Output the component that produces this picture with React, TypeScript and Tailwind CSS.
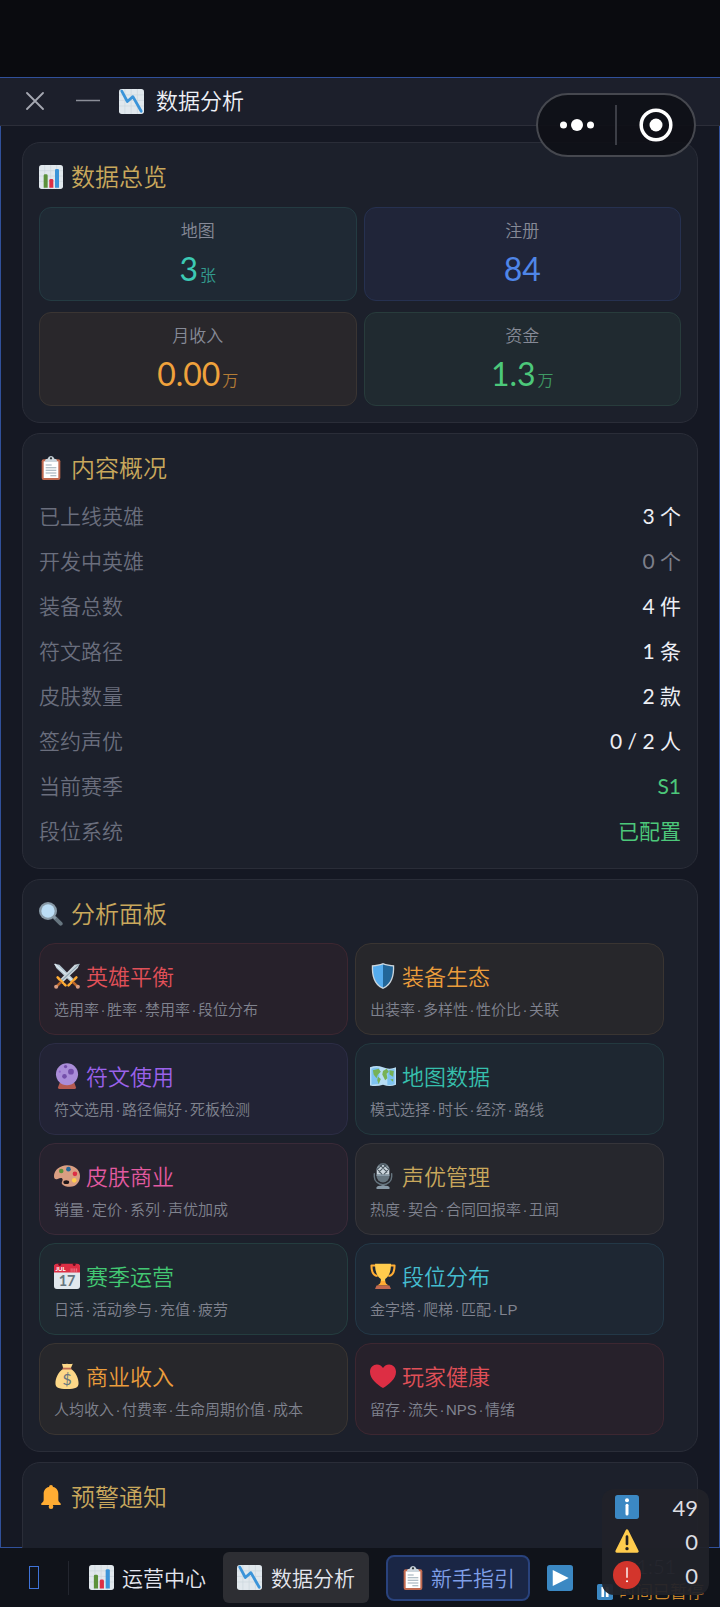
import React from "react";

const FONT = "font-['Lato','Noto_Sans_CJK_SC',sans-serif]";

type IconProps = { className: string };

function Svg({ className, children }: { className: string; children: React.ReactNode }) {
  return (
    <svg viewBox="0 0 36 36" className={className} aria-hidden="true">
      {children}
    </svg>
  );
}

function ChartGrid() {
  return (
    <>
      <rect width="36" height="36" rx="4" fill="#E1E8ED" />
      <path d="M0 8.5h36M0 16.5h36M0 24.5h36M8.5 0v36M17.5 0v36M26.5 0v36" stroke="#CCD6DD" strokeWidth="1" />
    </>
  );
}

const ChartDown = ({ className }: IconProps) => (
  <Svg className={className}>
    <ChartGrid />
    <path d="M4 3l8 15 8-7 12 21" fill="none" stroke="#3B94D9" strokeWidth="4" strokeLinecap="round" strokeLinejoin="round" />
  </Svg>
);

const BarChart = ({ className }: IconProps) => (
  <Svg className={className}>
    <ChartGrid />
    <path d="M7 16q0-2 2-2h2q2 0 2 2v18H7z" fill="#5C913B" />
    <path d="M15.500 23q0-2 2-2h2q2 0 2 2v11h-6z" fill="#DD2E44" />
    <path d="M24 8q0-2 2-2h2q2 0 2 2v26h-6z" fill="#3B94D9" />
  </Svg>
);

const Clipboard = ({ className }: IconProps) => (
  <Svg className={className}>
    <rect x="4" y="5" width="28" height="31" rx="3" fill="#C1694F" />
    <path d="M7 8h22v25H7z" fill="#fff" />
    <path d="M9 9V7q0-3 4-3 1-4 5-4t5 4q4 0 4 3v2z" fill="#CCD6DD" />
    <circle cx="18" cy="3.500" r="1.700" fill="#292F33" />
    <path d="M10 13.500h9M10 17.500h16M10 21.500h16M10 25.500h16M17 29.500h9" stroke="#99AAB5" strokeWidth="1.600" />
  </Svg>
);

const Magnifier = ({ className }: IconProps) => (
  <Svg className={className}>
    <path d="M23 23l9.500 9.500" stroke="#66757F" strokeWidth="6" strokeLinecap="round" />
    <path d="M21 21l4 4" stroke="#8899A6" strokeWidth="4" />
    <circle cx="13.500" cy="13.500" r="13.500" fill="#8899A6" />
    <circle cx="13.500" cy="13.500" r="10" fill="#BBDDF5" />
  </Svg>
);

const Bell = ({ className }: IconProps) => (
  <Svg className={className}>
    <circle cx="18" cy="32.500" r="3.500" fill="#FFAC33" />
    <path d="M18 0q3 0 3 3c6 1 8 6 8 11v8c0 4 4 5 4 7q0 1-2 1H5q-2 0-2-1c0-2 4-3 4-7v-8C7 9 9 4 15 3q0-3 3-3z" fill="#FFAC33" />
  </Svg>
);

const Swords = ({ className }: IconProps) => (
  <Svg className={className}>
    <path d="M0.500 1l7 1.500L27 22l-4 4L3 7z" fill="#B4C6D2" />
    <path d="M1 1.500L25 24" stroke="#DCE7EE" strokeWidth="2" />
    <path d="M35.500 1l-7 1.500L9 22l4 4L33 7z" fill="#CCD6DD" />
    <path d="M35 1.500L11 24" stroke="#8CA3B1" strokeWidth="1.500" />
    <path d="M5 20l11 11M31 20L20 31" stroke="#FFAC33" strokeWidth="3.500" strokeLinecap="round" strokeDasharray="4 2.500" />
    <path d="M10 26l-6 6M26 26l6 6" stroke="#BE6A2C" strokeWidth="3.500" />
    <circle cx="3" cy="33" r="2.800" fill="#D99E82" />
    <circle cx="33" cy="33" r="2.800" fill="#D99E82" />
  </Svg>
);

const Shield = ({ className }: IconProps) => (
  <Svg className={className}>
    <path d="M18 0c5 2 10 3 15.500 3 .5 14-2 27-15.500 33C4.500 30 2 17 2.500 3 8 3 13 2 18 0z" fill="#CCD6DD" />
    <path d="M18 2.200C13 4 9 4.600 4.300 4.800 4 17 6.500 28.500 18 34z" fill="#55ACEE" />
    <path d="M18 2.200c5 1.800 9 2.400 13.700 2.600C32 17 29.500 28.500 18 34z" fill="#226699" />
  </Svg>
);

const CrystalBall = ({ className }: IconProps) => (
  <Svg className={className}>
    <path d="M8 27h20l2.500 7q.5 2-2 2h-21q-2.500 0-2-2z" fill="#B55A50" />
    <circle cx="18" cy="15.500" r="15.300" fill="#AA8DD8" />
    <circle cx="16" cy="5" r="2.300" fill="#744EAA" />
    <circle cx="23.500" cy="12" r="4" fill="#744EAA" />
    <circle cx="14.500" cy="18.500" r="3.200" fill="#744EAA" />
    <circle cx="8" cy="12" r="1.500" fill="#9266CC" />
  </Svg>
);

const WorldMap = ({ className }: IconProps) => (
  <Svg className={className}>
    <path d="M0 6q9-4 18 0 9 4 18 0v24q-9 4-18 0-9 3-18 1z" fill="#B8DDF4" />
    <path d="M2 8q7-3 11-1v22q-5 0-11 1z" fill="#7EC3F0" />
    <path d="M24 9q5 1 10-1v21q-5 2-10 1z" fill="#7EC3F0" />
    <path d="M4 10l8-2 3 4-4 4-2 5-4-5zM11 19l4 3-3 7-2-5zM18 11l5-3 3 4-3 3 1 6-3 3-4-8zM27 10l6 1-1 8-5-3zM28 23l4-1v4z" fill="#77B255" />
  </Svg>
);

const Palette = ({ className }: IconProps) => (
  <Svg className={className}>
    <path d="M18 3C8 3 0 10 0 18c0 4 2 5 5 4 4-2 7-2 7 1 0 2-2 4-1 6 2 3 7 4 11 4 9 0 14-7 14-15C36 9 28 3 18 3z" fill="#D99E82" />
    <ellipse cx="17" cy="26.500" rx="4" ry="2.700" fill="#1d1518" />
    <circle cx="10" cy="11" r="3.200" fill="#5C913B" />
    <circle cx="20" cy="8.500" r="3.200" fill="#226699" />
    <circle cx="29" cy="15" r="3.200" fill="#DD2E44" />
    <circle cx="28" cy="24" r="3.200" fill="#FFCC4D" />
  </Svg>
);

const Microphone = ({ className }: IconProps) => (
  <Svg className={className}>
    <path d="M6 15v4a12 11 0 0 0 24 0v-4" fill="none" stroke="#66757F" strokeWidth="2" strokeLinecap="round" />
    <path d="M16 29h4v3h-4z" fill="#66757F" />
    <path d="M9 34q0-3 9-3t9 3v2H9z" fill="#8899A6" />
    <rect x="9" y="0" width="18" height="27" rx="9" fill="#66757F" />
    <path d="M9.500 8a9 8 0 0 1 17 0v8h-17z" fill="#CCD6DD" />
    <path d="M13 2l11 11M18 1l8 8M9 7l8 9M23 2L12 13M18 1l-8 8M27 7l-8 9" stroke="#4c5962" strokeWidth="1.500" />
    <path d="M9 17h18" stroke="#8899A6" strokeWidth="2" />
  </Svg>
);

const Calendar = ({ className }: IconProps) => (
  <Svg className={className}>
    <rect y="2" width="36" height="34" rx="4" fill="#E1E8ED" />
    <path d="M0 13V5q0-4 4-4h28q4 0 4 4v8z" fill="#DD2E44" />
    <circle cx="8" cy="2" r="2" fill="#5b1020" />
    <circle cx="28" cy="2" r="2" fill="#5b1020" />
    <path d="M23 8.500h10M23 11h10" stroke="#F4ABBA" strokeWidth="1.200" strokeDasharray="1.500 1" />
    <text x="2" y="11.500" fontSize="8.500" fontWeight="700" fill="#fff">JUL</text>
    <text x="18" y="31.500" textAnchor="middle" fontSize="20" fontWeight="700" fill="#66757F">17</text>
  </Svg>
);

const Trophy = ({ className }: IconProps) => (
  <Svg className={className}>
    <path d="M9 3.500H2c0 8 2 14 8.500 14.500M27 3.500h7c0 8-2 14-8.500 14.500" fill="none" stroke="#FFAC33" strokeWidth="2.800" strokeLinejoin="round" />
    <path d="M7 1h22c0 12-3 18-8 21v8h-6v-8C10 19 7 13 7 1z" fill="#FFCC4D" />
    <path d="M15 25h6q0 4 5 6H10q5-2 5-6z" fill="#FFAC33" />
    <path d="M9 31h18l2 5H7z" fill="#C1694F" />
  </Svg>
);

const MoneyBag = ({ className }: IconProps) => (
  <Svg className={className}>
    <path d="M11 1q3 1 7 0 4 1 8 0l-3 7c7 4 11 13 11 20 0 6-4 8-16 8S2 34 2 28C2 21 6 12 13 8z" fill="#FDD888" />
    <path d="M12 6.500h12v2.500H12z" fill="#BF6952" />
    <text x="18" y="30" textAnchor="middle" fontSize="22" fontWeight="400" fill="#67757F">$</text>
  </Svg>
);

const Heart = ({ className }: IconProps) => (
  <Svg className={className}>
    <path d="M36 12C36 6 31.500 2 26.500 2 22.500 2 19.500 4 18 7 16.500 4 13.500 2 9.500 2 4.500 2 0 6 0 12c0 10 10 18 18 22.500C26 30 36 22 36 12z" fill="#DD2E44" />
  </Svg>
);

const Play = ({ className }: IconProps) => (
  <Svg className={className}>
    <rect width="36" height="36" rx="4" fill="#3B88C3" />
    <path d="M8 7l22 11L8 29z" fill="#fff" />
  </Svg>
);

const Pause = ({ className }: IconProps) => (
  <Svg className={className}>
    <rect width="36" height="36" rx="4" fill="#3B88C3" />
    <path d="M10 7h6v22h-6zM20 7h6v22h-6z" fill="#fff" />
  </Svg>
);

const Info = ({ className }: IconProps) => (
  <Svg className={className}>
    <rect width="36" height="36" rx="4" fill="#3B88C3" />
    <circle cx="18" cy="8" r="3" fill="#fff" />
    <path d="M18 15.500v13" stroke="#fff" strokeWidth="4.500" strokeLinecap="round" />
  </Svg>
);

const Warning = ({ className }: IconProps) => (
  <Svg className={className}>
    <path d="M18 2.500L33.500 33.500h-31z" fill="#FFCC4D" stroke="#FFCC4D" strokeWidth="4" strokeLinejoin="round" />
    <path d="M18 11.500v11" stroke="#231F20" strokeWidth="4" strokeLinecap="round" />
    <circle cx="18" cy="29.500" r="2.500" fill="#231F20" />
  </Svg>
);

const ErrorDot = ({ className }: IconProps) => (
  <Svg className={className}>
    <circle cx="18" cy="18" r="18" fill="#D3352C" />
    <path d="M18 9v12" stroke="#fff" strokeWidth="1.800" strokeLinecap="round" />
    <circle cx="18" cy="26" r="1.400" fill="#fff" />
  </Svg>
);

type Icon = (p: IconProps) => React.ReactElement;

function Card({ icon: IconEl, title, className, children }: { icon: Icon; title: string; className: string; children?: React.ReactNode }) {
  return (
    <section className={`shrink-0 rounded-[18px] border border-[#2a2d38] bg-[#1c202b] px-4 pt-4 ${className}`}>
      <h2 className="flex h-9 items-center gap-2 text-2xl leading-9 text-[#c9a85c]">
        <IconEl className="size-6" />
        {title}
      </h2>
      {children}
    </section>
  );
}

const stats = [
  { label: "地图", value: "3", unit: "张", box: "border-[#243b42] bg-[#1f2934]", text: "text-[#3cc9b4]" },
  { label: "注册", value: "84", unit: "", box: "border-[#263150] bg-[#202539]", text: "text-[#4f86e8]" },
  { label: "月收入", value: "0.00", unit: "万", box: "border-[#3a3533] bg-[#29272b]", text: "text-[#f0a23c]" },
  { label: "资金", value: "1.3", unit: "万", box: "border-[#283c3c] bg-[#202a30]", text: "text-[#4cc87a]" },
];

const rows = [
  { label: "已上线英雄", value: "3 个", color: "text-[#eceef4]" },
  { label: "开发中英雄", value: "0 个", color: "text-[#7c7f8a]" },
  { label: "装备总数", value: "4 件", color: "text-[#eceef4]" },
  { label: "符文路径", value: "1 条", color: "text-[#eceef4]" },
  { label: "皮肤数量", value: "2 款", color: "text-[#eceef4]" },
  { label: "签约声优", value: "0 / 2 人", color: "text-[#eceef4]" },
  { label: "当前赛季", value: "S1", color: "text-[#4cc87a]" },
  { label: "段位系统", value: "已配置", color: "text-[#4cc87a]" },
];

const panels: { icon: Icon; title: string; desc: string[]; box: string; text: string }[] = [
  { icon: Swords, title: "英雄平衡", desc: ["选用率", "胜率", "禁用率", "段位分布"], box: "border-[#3d2731] bg-[#27212b]", text: "text-[#e05058]" },
  { icon: Shield, title: "装备生态", desc: ["出装率", "多样性", "性价比", "关联"], box: "border-[#3a3532] bg-[#27272b]", text: "text-[#eb9d3c]" },
  { icon: CrystalBall, title: "符文使用", desc: ["符文选用", "路径偏好", "死板检测"], box: "border-[#2c2d45] bg-[#222335]", text: "text-[#9b62ea]" },
  { icon: WorldMap, title: "地图数据", desc: ["模式选择", "时长", "经济", "路线"], box: "border-[#23393f] bg-[#1e2731]", text: "text-[#36bfac]" },
  { icon: Palette, title: "皮肤商业", desc: ["销量", "定价", "系列", "声优加成"], box: "border-[#3a2a38] bg-[#26222e]", text: "text-[#e25aa0]" },
  { icon: Microphone, title: "声优管理", desc: ["热度", "契合", "合同回报率", "丑闻"], box: "border-[#36353a] bg-[#26272d]", text: "text-[#c9a85c]" },
  { icon: Calendar, title: "赛季运营", desc: ["日活", "活动参与", "充值", "疲劳"], box: "border-[#243d3f] bg-[#1f2830]", text: "text-[#43c873]" },
  { icon: Trophy, title: "段位分布", desc: ["金字塔", "爬梯", "匹配", "LP"], box: "border-[#233847] bg-[#1e2733]", text: "text-[#45bdd0]" },
  { icon: MoneyBag, title: "商业收入", desc: ["人均收入", "付费率", "生命周期价值", "成本"], box: "border-[#3a3532] bg-[#27272b]", text: "text-[#eb9d3c]" },
  { icon: Heart, title: "玩家健康", desc: ["留存", "流失", "NPS", "情绪"], box: "border-[#3d2731] bg-[#27212b]", text: "text-[#e05058]" },
];

const logs: { icon: Icon; label: string; count: number; size: string }[] = [
  { icon: Info, label: "信息", count: 49, size: "size-6" },
  { icon: Warning, label: "警告", count: 0, size: "size-6" },
  { icon: ErrorDot, label: "错误", count: 0, size: "size-7" },
];

export default function App() {
  return (
    <div className={`relative flex h-screen flex-col overflow-hidden bg-[#0a0b0f] pt-[77px] font-[350] ${FONT}`}>
      <main className="flex min-h-0 flex-1 flex-col border border-[#30509a] bg-[#151823]">
        <header className="-mx-px flex h-12 shrink-0 items-center border-b border-[#2c2e39] bg-[#1c1f2b] pb-px pl-[26px]">
          <button aria-label="关闭" className="text-[#a5a8b2]">
            <svg viewBox="0 0 18 18" className="size-[18px]" stroke="currentColor" strokeWidth="1.800" strokeLinecap="round">
              <path d="M1 1l16 16M17 1L1 17" />
            </svg>
          </button>
          <button aria-label="最小化" className="ml-8 text-[#8b8e98]">
            <svg viewBox="0 0 24 18" className="h-[18px] w-6" stroke="currentColor" strokeWidth="1.500">
              <path d="M0 8.500h24" />
            </svg>
          </button>
          <ChartDown className="ml-[19px] size-[25px]" />
          <h1 className="ml-3 text-[22px] leading-8 text-[#eef0f6]">数据分析</h1>
        </header>

        <div className="-mb-px flex min-h-0 flex-1 flex-col gap-[10px] overflow-y-auto px-[21px] pt-4 [scrollbar-width:none]">
          <Card icon={BarChart} title="数据总览" className="pb-4">
            <div className="mt-3 grid grid-cols-2 gap-x-[7px] gap-y-[11px]">
              {stats.map((s) => (
                <div key={s.label} className={`flex h-[94px] flex-col items-center rounded-xl border pt-[11px] ${s.box}`}>
                  <div className="text-[17px] leading-6 text-[#868a97]">{s.label}</div>
                  <div className={`flex items-baseline gap-[2px] text-[32px] leading-[52px] font-normal ${s.text}`}>
                    {s.value}
                    {s.unit && <span className="text-base font-[350] opacity-70">{s.unit}</span>}
                  </div>
                </div>
              ))}
            </div>
          </Card>

          <Card icon={Clipboard} title="内容概况" className="pb-[15px]">
            <dl className="mt-[7px]">
              {rows.map((r) => (
                <div key={r.label} className="flex h-[45px] items-center justify-between text-[21px]">
                  <dt className="text-[#6a6e7d]">{r.label}</dt>
                  <dd className={`font-normal ${r.color}`}>{r.value}</dd>
                </div>
              ))}
            </dl>
          </Card>

          <Card icon={Magnifier} title="分析面板" className="pb-4">
            <div className="mt-[11px] mr-[17px] grid grid-cols-2 gap-x-[7px] gap-y-2">
              {panels.map((p) => (
                <button key={p.title} className={`flex h-[92px] flex-col rounded-2xl border px-[14px] pt-[15px] text-left ${p.box}`}>
                  <span className={`flex h-[34px] items-center gap-[6px] text-[22px] ${p.text}`}>
                    <p.icon className="size-[26px]" />
                    {p.title}
                  </span>
                  <span className="mt-[5px] font-['Liberation_Sans','Noto_Sans_CJK_SC',sans-serif] text-[15px] leading-6 whitespace-nowrap text-[#80838f]">
                    {p.desc.map((part, i) => (
                      <React.Fragment key={part}>
                        {i > 0 && <span className="inline-block w-2 text-center">·</span>}
                        {part}
                      </React.Fragment>
                    ))}
                  </span>
                </button>
              ))}
            </div>
          </Card>

          <Card icon={Bell} title="预警通知" className="min-h-[120px]" />
        </div>
      </main>

      <nav className="flex h-[59px] shrink-0 items-center bg-[#10131a] pl-[29px] text-[21px] text-[#e4e6ee]">
        <button aria-label="开始" className="h-[23px] w-[10px] shrink-0 border border-[#3f73d8]" />
        <span className="ml-[29px] h-[34px] w-px shrink-0 bg-[#23262f]" />
        <button className="ml-[7px] flex h-[51px] shrink-0 items-center gap-2 px-[13px]">
          <BarChart className="size-[25px]" />
          运营中心
        </button>
        <button className="ml-1 flex h-[51px] shrink-0 items-center gap-[9px] rounded-md bg-[#2d2e33] px-[14px]">
          <ChartDown className="size-[25px]" />
          数据分析
        </button>
        <button className="ml-[17px] flex h-[46px] shrink-0 items-center gap-[6px] rounded-lg border-2 border-[#29427c] bg-[#1a2645] px-[13px] text-[#7f9fe8]">
          <Clipboard className="size-6" />
          新手指引
        </button>
        <button aria-label="播放" className="ml-[17px] shrink-0">
          <Play className="size-[26px]" />
        </button>
        <div className="ml-6 flex shrink-0 flex-col items-center gap-1">
          <span className="text-xl leading-6 text-[#8a8d96]">21:51</span>
          <span className="flex items-center gap-[6px] text-[17px] leading-5 whitespace-nowrap text-[#d08a2c]">
            <Pause className="size-4" />
            时间已暂停
          </span>
        </div>
      </nav>

      <div className="absolute top-[93px] right-6 flex h-16 w-40 items-center rounded-full border-2 border-[#46484f] bg-[#0e1016]/90">
        <button aria-label="更多" className="flex flex-1 items-center justify-center">
          <svg viewBox="0 0 34 12" className="h-3 w-[34px]" fill="#fff">
            <circle cx="3.500" cy="6" r="3.500" />
            <circle cx="17" cy="6" r="6" />
            <circle cx="30.500" cy="6" r="3.500" />
          </svg>
        </button>
        <span className="h-10 w-[2px] bg-[#3c3e46]" />
        <button aria-label="退出" className="flex flex-1 items-center justify-center">
          <svg viewBox="0 0 34 34" className="size-[34px]">
            <circle cx="17" cy="17" r="14.800" fill="none" stroke="#fff" strokeWidth="3.500" />
            <circle cx="17" cy="17" r="6.500" fill="#fff" />
          </svg>
        </button>
      </div>

      <aside className="absolute right-[11px] bottom-3 w-[107px] rounded-xl bg-[#212229]/95 pt-px pr-[11px] pb-[3px] pl-[11px] text-[22px] font-normal text-[#dcdde2]">
        {logs.map((l) => (
          <div key={l.label} aria-label={l.label} className="flex h-[34px] items-center justify-between">
            <span className="flex w-7 justify-center">
              <l.icon className={l.size} />
            </span>
            <span>{l.count}</span>
          </div>
        ))}
      </aside>
    </div>
  );
}
